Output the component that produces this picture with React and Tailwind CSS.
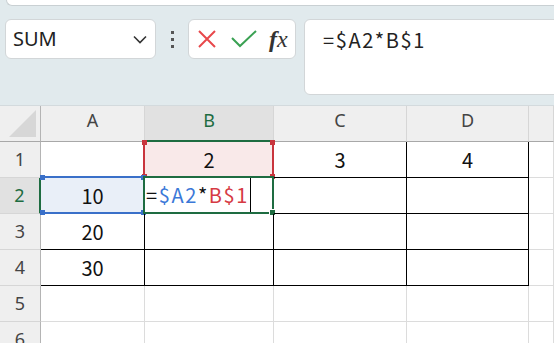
import React from 'react';

const cellFont = "font-['Noto_Sans_CJK_JP','Noto_Sans',sans-serif]";
const uiFont = "font-['Noto_Sans','Open_Sans',sans-serif]";

const Corner = ({ className }) => (
  <span className={`absolute w-[5px] h-[5px] ${className}`} />
);

const RowHead = ({ n, active }) => (
  <div
    className={`h-[36px] flex items-center justify-center border-b border-[#d6d6d6] text-[18px] ${uiFont} ${
      active
        ? 'bg-[#e1e1e1] text-[#1e6c41] border-r-2 border-r-[#1e6c41]'
        : 'bg-[#efefef] text-[#444] border-r border-r-[#b4b4b4]'
    }`}
  >
    {n}
  </div>
);

const ColHead = ({ label, active }) => (
  <div
    className={`h-[36px] flex items-center justify-center pb-[6px] text-[18px] border-r border-r-[#d6d6d6] ${uiFont} ${
      active
        ? 'bg-[#e1e1e1] text-[#1e6c41] border-b-2 border-b-[#1e6c41]'
        : 'bg-[#efefef] text-[#444] border-b border-b-[#a8a8a8]'
    }`}
  >
    {label}
  </div>
);

const Cell = ({ children, black, className = '' }) => (
  <div
    className={`relative h-[36px] flex items-center justify-center border-r border-b text-[20px] text-[#111] ${cellFont} ${
      black ? 'border-black' : 'border-[#dcdcdc]'
    } ${className}`}
  >
    {children}
  </div>
);

export default function App() {
  return (
    <div className="w-[554px] h-[343px] overflow-hidden bg-white">
      {/* toolbar */}
      <div className="h-[106px] bg-[#e1eaed] border-b border-[#d3dadd]">
        <div className="h-[6px] ml-[6px] bg-white rounded-bl-[12px] border-b border-l border-[#c9d0d3]" />
        <div className="flex items-start pl-[5px] pt-[13px]">
          <div className="w-[151px] h-[40px] bg-white border border-[#d2d6d8] rounded-[6px] flex items-center justify-between pl-[7px] pr-[8px]">
            <span className={`text-[20px] text-[#222] ${uiFont}`}>SUM</span>
            <svg width="14" height="9" viewBox="0 0 14 9" fill="none" stroke="#333" strokeWidth="1.6">
              <path d="M1 1.5l6 6 6-6" />
            </svg>
          </div>
          <div className="w-[32px] h-[40px] flex flex-col items-center justify-center gap-[4px]">
            <span className="w-[3px] h-[3px] bg-[#555]" />
            <span className="w-[3px] h-[3px] bg-[#555]" />
            <span className="w-[3px] h-[3px] bg-[#555]" />
          </div>
          <div className="w-[108px] h-[40px] bg-white border border-[#d2d6d8] rounded-[6px] flex items-center pl-[8px]">
            <svg width="20" height="20" viewBox="0 0 20 20" fill="none" stroke="#e8484b" strokeWidth="2">
              <path d="M2 2l16 16M18 2L2 18" />
            </svg>
            <svg className="ml-[14px]" width="26" height="18" viewBox="0 0 26 18" fill="none" stroke="#3aa153" strokeWidth="2">
              <path d="M1 8l8 8L25 1" />
            </svg>
            <span className="ml-[12px] text-[24px] italic text-[#333] font-['Liberation_Serif',serif] leading-none">
              <span className="font-bold">f</span>x
            </span>
          </div>
          <div className="flex-1 ml-[8px] mr-[-12px] h-[76px] bg-white border border-[#d2d6d8] rounded-[6px] pl-[18px] pt-[5px]">
            <span className={`text-[20px] tracking-[1.6px] text-[#222] ${cellFont}`}>=$A2*B$1</span>
          </div>
        </div>
      </div>

      {/* sheet */}
      <div className="grid grid-cols-[41px_104px_129px_133px_122px_1fr]">
        {/* header row */}
        <div className="relative h-[36px] bg-[#efefef] border-r border-r-[#b4b4b4] border-b border-b-[#a8a8a8]">
          <svg className="absolute right-[4px] bottom-[4px]" width="27" height="27" viewBox="0 0 27 27">
            <path d="M27 0L27 27L0 27Z" fill="#d7d7d7" />
          </svg>
        </div>
        <ColHead label="A" />
        <ColHead label="B" active />
        <ColHead label="C" />
        <ColHead label="D" />
        <ColHead label="" />

        {/* row 1 */}
        <RowHead n="1" />
        <Cell black />
        <Cell black className="bg-[#f9e9e9]">
          <span>2</span>
          <div className="absolute -left-[2px] -top-[1px] -right-[1px] -bottom-[1px] border-2 border-[#c9353d] border-t-0">
            <Corner className="bg-[#c9353d] -left-[3px] -top-[1px]" />
            <Corner className="bg-[#c9353d] -right-[3px] -top-[1px]" />
            <Corner className="bg-[#c9353d] -left-[3px] -bottom-[3px]" />
            <Corner className="bg-[#c9353d] -right-[3px] -bottom-[3px]" />
          </div>
        </Cell>
        <Cell black>3</Cell>
        <Cell black>4</Cell>
        <Cell />

        {/* row 2 */}
        <RowHead n="2" active />
        <Cell black className="bg-[#e9eff8]">
          <span>10</span>
          <div className="absolute left-0 -top-[2px] -right-[1px] -bottom-[1px] border-2 border-[#3a70c9] border-l-0">
            <Corner className="bg-[#3a70c9] -left-[1px] -top-[3px]" />
            <Corner className="bg-[#3a70c9] -right-[3px] -top-[3px]" />
            <Corner className="bg-[#3a70c9] -left-[1px] -bottom-[3px]" />
            <Corner className="bg-[#3a70c9] -right-[3px] -bottom-[3px]" />
          </div>
        </Cell>
        <Cell black className="bg-white !justify-start">
          <div className="absolute -left-[2px] -top-[2px] -right-[1px] -bottom-[1px] border-2 border-[#1e6c41] flex items-center pl-[1px]">
            <span className={`text-[20px] tracking-[1.6px] leading-none ${cellFont}`}>
              <span className="text-[#111]">=</span>
              <span className="text-[#3b78d8]">$A2</span>
              <span className="text-[#111]">*</span>
              <span className="text-[#d63a44]">B$1</span>
            </span>
            <span className="ml-[1px] w-[1.5px] h-[34px] bg-black" />
            <span className="absolute -right-[4px] -bottom-[4px] w-[7px] h-[7px] bg-[#1e6c41] border border-white" />
          </div>
        </Cell>
        <Cell black />
        <Cell black />
        <Cell />

        {/* row 3 */}
        <RowHead n="3" />
        <Cell black>20</Cell>
        <Cell black />
        <Cell black />
        <Cell black />
        <Cell />

        {/* row 4 */}
        <RowHead n="4" />
        <Cell black>30</Cell>
        <Cell black />
        <Cell black />
        <Cell black />
        <Cell />

        {/* row 5 */}
        <RowHead n="5" />
        <Cell />
        <Cell />
        <Cell />
        <Cell />
        <Cell />

        {/* row 6 */}
        <RowHead n="6" />
        <Cell />
        <Cell />
        <Cell />
        <Cell />
        <Cell />
      </div>
    </div>
  );
}
